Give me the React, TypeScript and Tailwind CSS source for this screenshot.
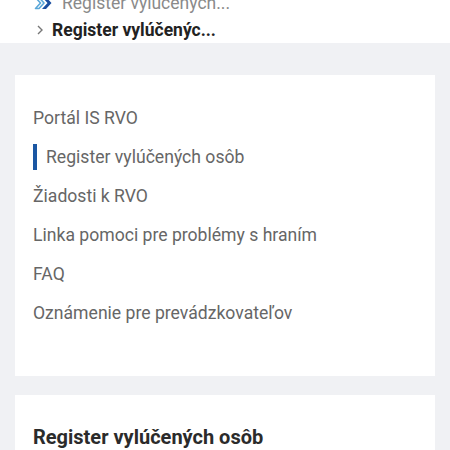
import React from 'react';

const menu = [
  'Portál IS RVO',
  'Register vylúčených osôb',
  'Žiadosti k RVO',
  'Linka pomoci pre problémy s hraním',
  'FAQ',
  'Oznámenie pre prevádzkovateľov',
];

const Logo = () => (
  <svg width="18" height="14" viewBox="0 0 18 14" className="shrink-0">
    <path d="M1.5 1.5 L5 1.5 L10 7 L5 12.5 L1.5 12.5 L6.5 7 Z" fill="none" stroke="#5aa7d8" strokeWidth="1.6" strokeLinejoin="round" />
    <path d="M8 1 L12 1 L17.5 7 L12 13 L8 13 L13.5 7 Z" fill="#1c4fa0" />
  </svg>
);

const App: React.FC = () => {
  return (
    <div className="w-[450px] h-[450px] overflow-hidden bg-[#f0f1f4] font-['Roboto','Liberation_Sans',sans-serif]">
      {/* breadcrumb */}
      <div className="bg-white h-[43px] flex flex-col pl-[34px]">
        <div className="flex items-center gap-[10px] -mt-[8px] h-[22px]">
          <Logo />
          <span className="text-[17.5px] text-[#8a8a8a]">Register vylucených...</span>
        </div>
        <div className="flex items-center gap-[7px] mt-[5px] h-[22px] pl-[1px]">
          <svg width="10" height="12" viewBox="0 0 10 12">
            <path d="M3 2 L7 6 L3 10" fill="none" stroke="#777" strokeWidth="1.4" />
          </svg>
          <span className="text-[17.5px] font-bold text-[#222]">Register vylúčenýc...</span>
        </div>
      </div>

      <div className="px-[15px] pt-[32px]">
        <nav className="bg-white pt-[31px] pb-[51px] px-[18px] flex flex-col gap-[15px]">
          {menu.map((item, i) => (
            <div key={i} className="flex items-center h-[24px]">
              {i === 1 && <span className="w-[4px] h-[26px] bg-[#1b57a3] mr-[9px]" />}
              <span className="text-[17.6px] leading-[24px] text-[#666]">{item}</span>
            </div>
          ))}
        </nav>

        <div className="bg-white mt-[19px] pt-[30px] px-[18px] h-[100px]">
          <h2 className="text-[20px] leading-[24px] font-bold text-[#2b2b2b]">Register vylúčených osôb</h2>
        </div>
      </div>
    </div>
  );
};

export default App;
